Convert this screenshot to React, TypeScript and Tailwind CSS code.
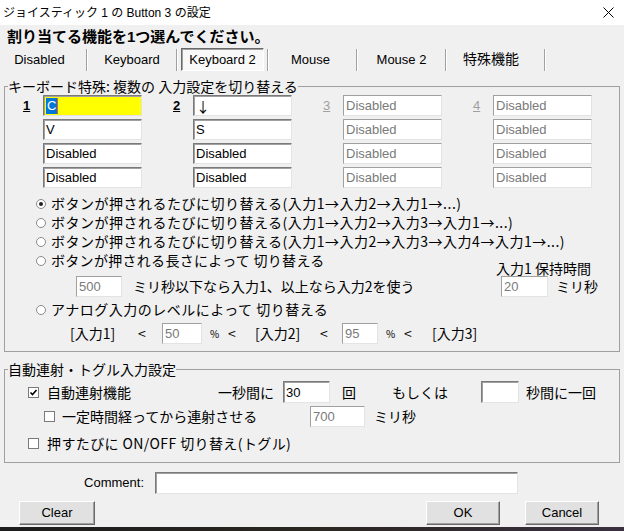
import React from 'react';
import clsx from 'clsx';

const latin = "font-['Liberation_Sans','Noto_Sans_CJK_JP',sans-serif]";

const Field = ({ value, className, disabled, cjk }: { value?: string; className: string; disabled?: boolean; cjk?: boolean }) => (
  <div
    className={clsx(
      cjk ? "font-['Noto_Sans_CJK_JP',sans-serif] text-[14px]" : clsx(latin, 'text-[13px]'),
      'flex items-center bg-white pl-[2px] leading-none border border-[#7a7a7a] border-b-[#e3e3e3] border-r-[#e3e3e3] overflow-hidden whitespace-nowrap',
      disabled ? 'text-[#7a7a7a] border-t-[#a0a0a0] border-l-[#a0a0a0]' : 'text-black shadow-[inset_1px_1px_0_#a0a0a0]',
      className
    )}
  >
    {value}
  </div>
);

const Radio = ({ checked }: { checked?: boolean }) => (
  <span className="w-[10px] h-[10px] rounded-full border border-[#8a8a8a] bg-white flex items-center justify-center shrink-0">
    {checked && <span className="w-[4px] h-[4px] rounded-full bg-[#222]" />}
  </span>
);

const Check = ({ checked }: { checked?: boolean }) => (
  <span className="w-[11px] h-[11px] border border-[#7a7a7a] bg-white flex items-center justify-center shrink-0">
    {checked && (
      <svg width="9" height="9" viewBox="0 0 9 9">
        <path d="M1.5 4.5 L3.5 6.5 L7.5 2" fill="none" stroke="#000" strokeWidth="1.6" />
      </svg>
    )}
  </span>
);

const Button = ({ label, className }: { label: string; className: string }) => (
  <div
    className={clsx(
      latin,
      'h-[24px] flex items-center justify-center bg-[#e1e1e1] text-[13px] border border-t-white border-l-white border-b-[#696969] border-r-[#696969] shadow-[inset_-1px_-1px_0_#a0a0a0]',
      className
    )}
  >
    {label}
  </div>
);

const Sep = () => <div className="w-[2px] h-[22px] border-l border-l-[#a0a0a0] border-r border-r-white" />;

const App = () => {
  const cols = [
    { n: '1', vals: ['C', 'V', 'Disabled', 'Disabled'], off: false },
    { n: '2', vals: ['↓', 'S', 'Disabled', 'Disabled'], off: false },
    { n: '3', vals: ['Disabled', 'Disabled', 'Disabled', 'Disabled'], off: true },
    { n: '4', vals: ['Disabled', 'Disabled', 'Disabled', 'Disabled'], off: true },
  ];

  const radios = [
    'ボタンが押されるたびに切り替える(入力1→入力2→入力1→...)',
    'ボタンが押されるたびに切り替える(入力1→入力2→入力3→入力1→...)',
    'ボタンが押されるたびに切り替える(入力1→入力2→入力3→入力4→入力1→...)',
  ];

  return (
    <div className="w-[624px] h-[531px] overflow-hidden bg-[#f0f0f0] text-black font-['Noto_Sans_CJK_JP',sans-serif] text-[14px]">
      {/* title bar */}
      <div className="h-[25px] bg-white flex items-center pl-[3px] pr-[10px]">
        <span className={clsx(latin, 'text-[12px] leading-none')}>ジョイスティック 1 の Button 3 の設定</span>
        <svg className="ml-auto" width="11" height="11" viewBox="0 0 11 11">
          <path d="M0.5 0.5 L10.5 10.5 M10.5 0.5 L0.5 10.5" stroke="#000" strokeWidth="1" />
        </svg>
      </div>

      <div className={clsx(latin, 'h-[22px] flex items-center pl-[7px] text-[15px] font-bold leading-none')}>
        割り当てる機能を1つ選んでください。
      </div>

      {/* tabs */}
      <div className={clsx(latin, 'mt-[1px] h-[23px] flex items-center text-[13px]')}>
        <div className="w-[86px] flex justify-center pr-[7px]">Disabled</div>
        <Sep />
        <div className="w-[88px] flex justify-center">Keyboard</div>
        <Sep />
        <div className="w-[89px] h-[23px] px-[3px]">
          <div className="h-[23px] flex items-center justify-center bg-[#f8f8f8] border border-t-[#696969] border-l-[#696969] border-b-white border-r-white shadow-[inset_1px_1px_0_#a0a0a0]">
            Keyboard 2
          </div>
        </div>
        <Sep />
        <div className="w-[87px] flex justify-center pr-[4px]">Mouse</div>
        <Sep />
        <div className="w-[87px] flex justify-center">Mouse 2</div>
        <Sep />
        <div className="w-[97px] flex justify-center pr-[9px] text-[14px]">特殊機能</div>
        <Sep />
      </div>

      {/* keyboard special group */}
      <fieldset className="mt-[7px] mx-[4px] border border-[#a0a0a0] pb-[7px]">
        <legend className="ml-[3px] leading-[16px] h-[16px]">キーボード特殊: 複数の 入力設定を切り替える</legend>
        <div className="pt-[1px] pl-[17px] flex gap-[30px]">
          {cols.map((c) => (
            <div key={c.n} className="flex">
              <div
                className={clsx(
                  latin,
                  'w-[21px] h-[21px] flex items-center pl-[1px] text-[13px] font-bold underline',
                  c.off && 'text-[#a0a0a0] font-normal'
                )}
              >
                {c.n}
              </div>
              <div className="flex flex-col gap-[3px]">
                {c.vals.map((v, i) =>
                  c.n === '1' && i === 0 ? (
                    <div
                      key={i}
                      className="w-[99px] h-[21px] flex items-center pl-[2px] bg-[#ffff00] border border-[#7a7a7a] border-b-[#e3e3e3] border-r-[#e3e3e3] shadow-[inset_1px_1px_0_#a0a0a0]"
                    >
                      <span className={clsx(latin, 'h-[16px] px-[1px] flex items-center bg-[#0078d7] text-white text-[13px] leading-none')}>C</span>
                      <span className="w-[1px] h-[16px] bg-[#e0602a]" />
                    </div>
                  ) : (
                    <Field key={i} value={v} disabled={c.off} cjk={v === '↓'} className="w-[99px] h-[21px]" />
                  )
                )}
              </div>
            </div>
          ))}
        </div>

        <div className="mt-[6px] flex flex-col">
          {radios.map((r, i) => (
            <div key={i} className="h-[19px] flex items-center pl-[31px] gap-[5px] whitespace-nowrap">
              <Radio checked={i === 0} />
              <span className="tracking-[0.5px]">{r}</span>
            </div>
          ))}
          <div className="flex items-start">
            <div className="h-[19px] flex items-center pl-[31px] gap-[5px]">
              <Radio />
              <span className="tracking-[0.3px]">ボタンが押される長さによって 切り替える</span>
            </div>
            <div className="ml-auto pr-[28px] pt-[9px] h-[25px] leading-[16px]">入力1 保持時間</div>
          </div>
          <div className="h-[21px] flex items-center pl-[71px] pr-[21px]">
            <Field value="500" disabled className="w-[46px] h-[21px]" />
            <span className="ml-[11px]">ミリ秒以下なら入力1、以上なら入力2を使う</span>
            <Field value="20" disabled className="ml-auto w-[47px] h-[21px]" />
            <span className="ml-[8px]">ミリ秒</span>
          </div>
          <div className="mt-[3px] h-[19px] flex items-center pl-[31px] gap-[5px]">
            <Radio />
            <span className="tracking-[0.5px]">アナログ入力のレベルによって 切り替える</span>
          </div>
          <div className="mt-[4px] h-[21px] flex items-center pl-[65px]">
            <span className="w-[68px]">[入力1]</span>
            <span className="w-[24px]">&lt;</span>
            <Field value="50" disabled className="w-[40px] h-[21px]" />
            <span className="ml-[8px] w-[18px] text-[10px]">%</span>
            <span className="w-[27px]">&lt;</span>
            <span className="w-[65px]">[入力2]</span>
            <span className="w-[22px]">&lt;</span>
            <Field value="95" disabled className="w-[36px] h-[21px]" />
            <span className="ml-[8px] w-[18px] text-[10px]">%</span>
            <span className="w-[28px]">&lt;</span>
            <span>[入力3]</span>
          </div>
        </div>
      </fieldset>

      {/* auto fire group */}
      <fieldset className="mt-[9px] mx-[4px] border border-[#a0a0a0] pb-[10px]">
        <legend className="ml-[3px] leading-[16px] h-[16px]">自動連射・トグル入力設定</legend>
        <div className="mt-[4px] h-[22px] flex items-center pl-[23px] whitespace-nowrap">
          <Check checked />
          <span className="ml-[8px] w-[171px]">自動連射機能</span>
          <span className="w-[65px]">一秒間に</span>
          <Field value="30" className="w-[47px] h-[22px]" />
          <span className="ml-[12px] w-[50px]">回</span>
          <span className="w-[89px]">もしくは</span>
          <Field value="" className="w-[38px] h-[22px]" />
          <span className="ml-[7px]">秒間に一回</span>
        </div>
        <div className="mt-[3px] h-[21px] flex items-center pl-[39px] whitespace-nowrap">
          <Check />
          <span className="ml-[7px] w-[248px]">一定時間経ってから連射させる</span>
          <Field value="700" disabled className="w-[55px] h-[21px]" />
          <span className="ml-[9px]">ミリ秒</span>
        </div>
        <div className="mt-[7px] h-[18px] flex items-center pl-[23px] whitespace-nowrap">
          <Check />
          <span className="ml-[8px] tracking-[0.4px]">押すたびに ON/OFF 切り替え(トグル)</span>
        </div>
      </fieldset>

      {/* comment */}
      <div className="mt-[9px] h-[22px] flex items-center">
        <span className={clsx(latin, 'w-[144px] text-right text-[13px]')}>Comment:</span>
        <Field value="" className="ml-[11px] w-[363px] h-[22px]" />
      </div>

      {/* buttons */}
      <div className="mt-[7px] flex items-center">
        <Button label="Clear" className="ml-[19px] w-[76px]" />
        <Button label="OK" className="ml-auto w-[74px]" />
        <Button label="Cancel" className="ml-[25px] mr-[25px] w-[74px]" />
      </div>

      <div className="mt-[2px] h-[10px] bg-gradient-to-r from-[#1c1c1c] via-[#2a2620] to-[#3a3040]" />
    </div>
  );
};

export default App;
